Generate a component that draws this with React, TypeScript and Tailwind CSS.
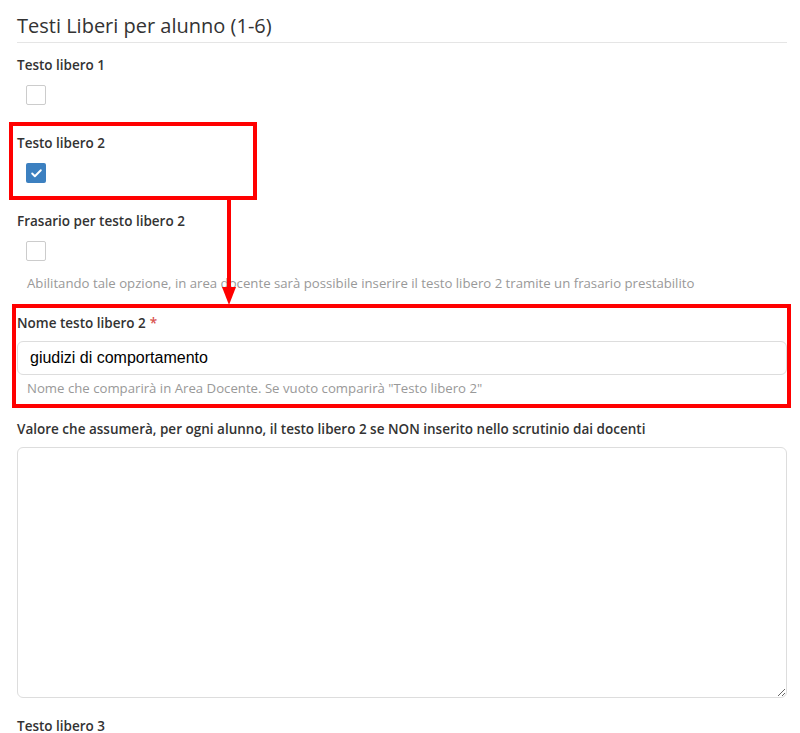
import { Check } from 'lucide-react';

function Label({ text, required }: { text: string; required?: boolean }) {
  return (
    <div className="text-[13.5px] leading-[20px] font-semibold text-[#333]">
      {text}
      {required && <span className="text-[#d9534f] ml-1">*</span>}
    </div>
  );
}

function Box({ checked }: { checked?: boolean }) {
  return (
    <div className="ml-[9px] mt-[10px]">
      {checked ? (
        <div className="w-[20px] h-[20px] rounded-[2px] bg-[#3c80c0] flex items-center justify-center">
          <Check className="w-[13px] h-[13px] text-white" strokeWidth={3.5} />
        </div>
      ) : (
        <div className="w-[20px] h-[20px] rounded-[2px] border border-[#ccc] bg-white" />
      )}
    </div>
  );
}

function Help({ children }: { children: React.ReactNode }) {
  return <div className="ml-[10px] text-[13.2px] leading-[18px] text-[#999]">{children}</div>;
}

export default function App() {
  return (
    <div
      className="relative w-[800px] h-[733px] overflow-hidden bg-white pl-[17px] pr-[13px]"
      style={{ fontFamily: '"Open Sans", "Noto Sans", sans-serif' }}
    >
      <div className="pt-[12px] pb-[2px] border-b border-[#e5e5e5]">
        <h2 className="text-[20px] leading-[28px] font-normal text-[#333]">Testi Liberi per alunno (1-6)</h2>
      </div>

      <div className="mt-[12px]">
        <Label text="Testo libero 1" />
        <Box />
      </div>

      <div className="mt-[28px]">
        <Label text="Testo libero 2" />
        <Box checked />
      </div>

      <div className="mt-[28px]">
        <Label text="Frasario per testo libero 2" />
        <Box />
        <div className="mt-[13px]">
          <Help>Abilitando tale opzione, in area docente sarà possibile inserire il testo libero 2 tramite un frasario prestabilito</Help>
        </div>
      </div>

      <div className="mt-[21px]">
        <Label text="Nome testo libero 2" required />
        <div className="mt-[8px] h-[34px] border border-[#ddd] rounded-[6px] flex items-center px-[12px] text-[16px] text-black" style={{ fontFamily: '"Liberation Sans", Arial, sans-serif' }}>
          giudizi di comportamento
        </div>
        <div className="mt-[4px]">
          <Help>Nome che comparirà in Area Docente. Se vuoto comparirà "Testo libero 2"</Help>
        </div>
      </div>

      <div className="mt-[22px]">
        <Label text="Valore che assumerà, per ogni alunno, il testo libero 2 se NON inserito nello scrutinio dai docenti" />
        <textarea className="mt-[8px] block w-full h-[251px] border border-[#ddd] rounded-[6px] resize-y outline-none" />
      </div>

      <div className="mt-[18px]">
        <Label text="Testo libero 3" />
      </div>

      {/* annotations */}
      <div className="absolute left-[9px] top-[122px] w-[248px] h-[78px] border-[4px] border-[#ff0000]" />
      <div className="absolute left-[12px] top-[304px] w-[779px] h-[104px] border-[4px] border-[#ff0000]" />
      <svg className="absolute left-[218px] top-[198px]" width="22" height="110" viewBox="0 0 22 110">
        <line x1="11" y1="0" x2="11" y2="92" stroke="#ff0000" strokeWidth="4" />
        <polygon points="4,89 18,89 11,107" fill="#ff0000" />
      </svg>
    </div>
  );
}
